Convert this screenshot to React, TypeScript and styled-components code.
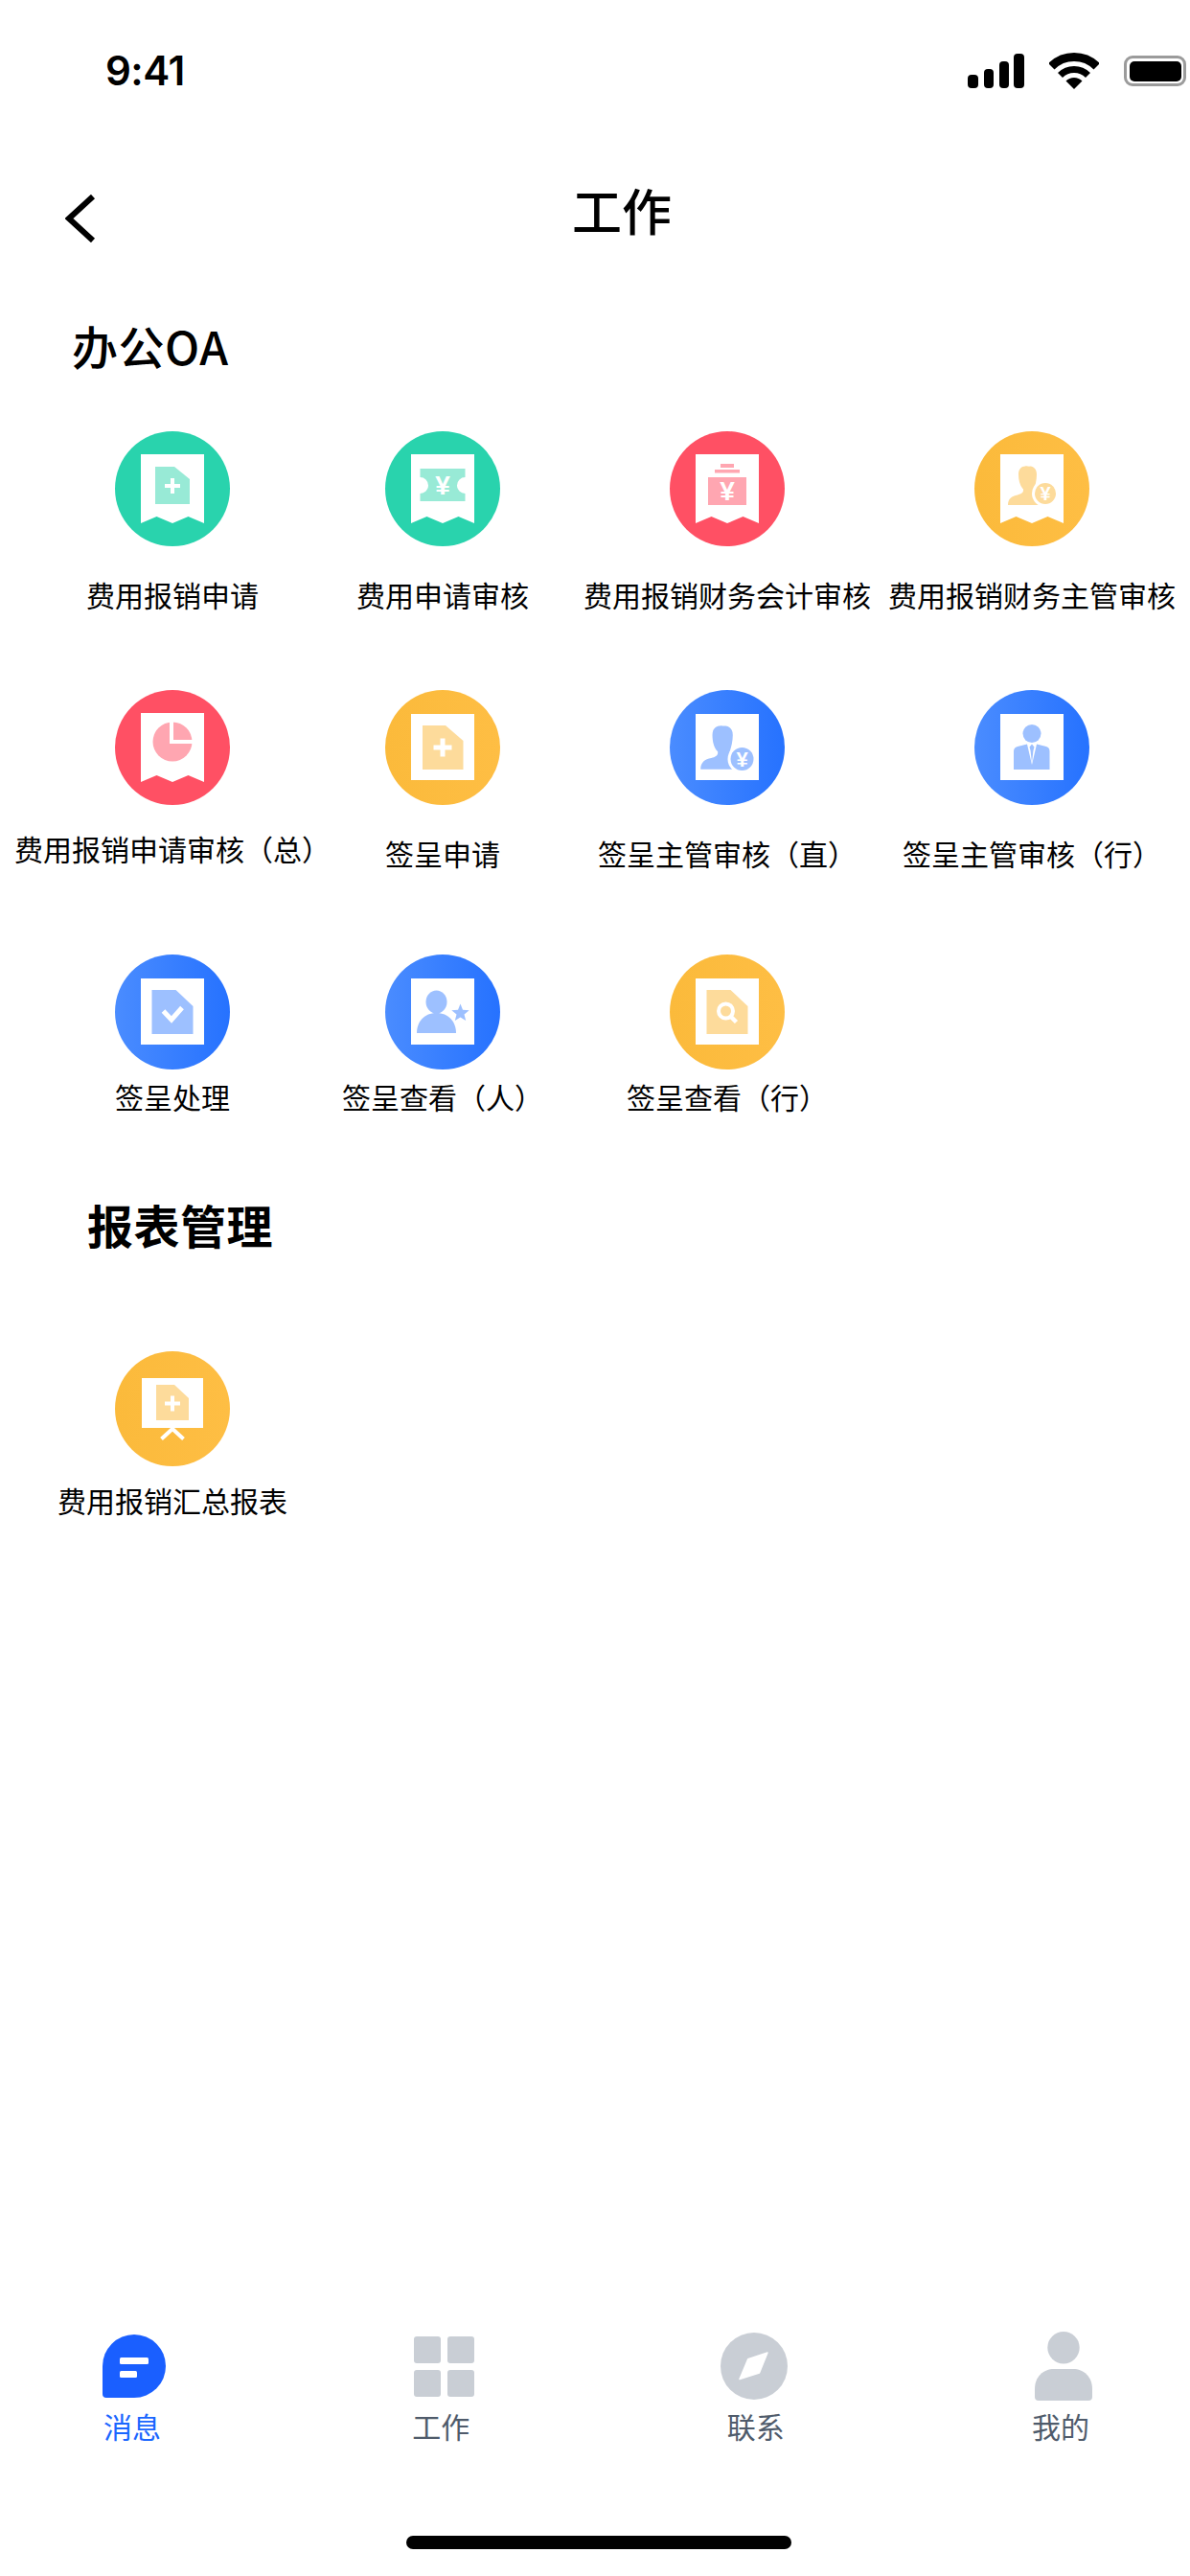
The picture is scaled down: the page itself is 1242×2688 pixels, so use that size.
import React from 'react';
import styled, { createGlobalStyle } from 'styled-components';

const GlobalStyle = createGlobalStyle`
  html, body {
    margin: 0;
    padding: 0;
    background: #fff;
  }
`;

type Tone = 'green' | 'red' | 'yellow' | 'blue';

const toneBackground: Record<Tone, string> = {
  green: '#29d3ad',
  red: '#ff5064',
  yellow: 'linear-gradient(90deg, #fbba3b 0%, #febe44 100%)',
  blue: 'linear-gradient(90deg, #4a8cff 0%, #2672ff 100%)',
};

const toneSoft: Record<Tone, string> = {
  green: '#98ead6',
  red: '#ffa6b1',
  yellow: '#fddb9b',
  blue: '#9dc0ff',
};

const Page = styled.div`
  width: 1242px;
  height: 2688px;
  display: flex;
  flex-direction: column;
  background: #fff;
  overflow: hidden;
  font-family: 'Noto Sans CJK SC', 'Noto Sans', sans-serif;
  color: #000;
`;

const StatusBar = styled.div`
  height: 148px;
  padding: 0 4px 0 110px;
  display: flex;
  align-items: center;
  justify-content: space-between;
  box-sizing: border-box;
`;

const StatusTime = styled.span`
  font-family: Inter, 'Liberation Sans', sans-serif;
  font-size: 42px;
  font-weight: 600;
  letter-spacing: -0.5px;
  margin-top: -2px;
`;

const StatusIcons = styled.div`
  display: flex;
  align-items: center;
`;

const Battery = styled.div`
  width: 65px;
  height: 32px;
  margin-left: 26px;
  padding: 2.5px;
  box-sizing: border-box;
  border: 3px solid #9b9b9b;
  border-radius: 9px;
  &::after {
    content: '';
    display: block;
    width: 100%;
    height: 100%;
    background: #000;
    border-radius: 5px;
  }
`;

const Header = styled.header`
  height: 160px;
  padding-left: 68px;
  display: flex;
  align-items: center;
  gap: 497px;
`;

const PageTitle = styled.h1`
  margin: -18px 0 0;
  font-size: 52px;
  line-height: 64px;
  font-weight: 500;
`;

const SectionTitle = styled.h2<{ $indent: number; $top: number; $weight: number }>`
  margin: ${(p) => p.$top}px 0 0 ${(p) => p.$indent}px;
  font-size: 48px;
  line-height: 60px;
  font-weight: ${(p) => p.$weight};
  letter-spacing: 0.5px;
`;

const TileRow = styled.div<{ $top: number }>`
  margin-top: ${(p) => p.$top}px;
  display: grid;
  grid-template-columns: 360px 204px 390px 246px;
`;

const Tile = styled.div`
  display: flex;
  flex-direction: column;
  align-items: center;
`;

const IconCircle = styled.div<{ $tone: Tone }>`
  width: 120px;
  height: 120px;
  border-radius: 50%;
  background: ${(p) => toneBackground[p.$tone]};
  svg {
    display: block;
  }
`;

const TileLabel = styled.span<{ $gap: number }>`
  margin-top: ${(p) => p.$gap}px;
  font-size: 30px;
  line-height: 40px;
  white-space: nowrap;
`;

const YenText = styled.text`
  font-family: 'Liberation Sans', sans-serif;
  font-weight: 700;
  fill: #fff;
  text-anchor: middle;
`;

const TabBar = styled.nav`
  margin-top: auto;
  padding: 0 92px 0 100px;
  display: flex;
  justify-content: space-between;
`;

const Tab = styled.div<{ $shift: number }>`
  width: 80px;
  display: flex;
  flex-direction: column;
  align-items: center;
  gap: 6px;
  span {
    position: relative;
    left: ${(p) => p.$shift}px;
  }
`;

const TabIconBox = styled.div`
  height: 72px;
  display: flex;
  align-items: center;
  justify-content: center;
`;

const TabLabel = styled.span<{ $active?: boolean }>`
  font-size: 30px;
  line-height: 40px;
  white-space: nowrap;
  color: ${(p) => (p.$active ? '#1a66ff' : '#4f5b6b')};
`;

const HomeBar = styled.div`
  width: 402px;
  height: 14px;
  margin: 95px 0 28px 424px;
  border-radius: 7px;
  background: #000;
`;

const Art: React.FC<{ children: React.ReactNode }> = ({ children }) => (
  <svg width="120" height="120" viewBox="0 0 120 120">
    {children}
  </svg>
);

const ReceiptSheet = () => <path d="M27 24H93V96L76.5 89L60 96L43.5 89L27 96Z" fill="#fff" />;
const PlainSheet = () => <rect x="27" y="25" width="66" height="69" fill="#fff" />;

const PlusMark: React.FC<{ cx: number; cy: number; size: number; bar: number }> = ({ cx, cy, size, bar }) => (
  <path
    d={`M${cx - size / 2} ${cy}H${cx + size / 2}M${cx} ${cy - size / 2}V${cy + size / 2}`}
    stroke="#fff"
    strokeWidth={bar}
  />
);

const BustShape: React.FC<{ fill: string }> = ({ fill }) => (
  <path
    d="M35 77C35 70.5 39 67.5 45 66.5C49 65.5 51.5 64 51 60.5C47.5 57 46 51 46 45C46 39.5 49 36.5 53 36.5C55 36 56.5 37 58.5 36.5C62 37 65 39.5 65 45C65 52 63 58 62 61C62 64 68 66 75 68V77Z"
    fill={fill}
  />
);

const icons: Record<string, (soft: string) => React.ReactNode> = {
  receiptAdd: (soft) => (
    <>
      <ReceiptSheet />
      <path d="M42 37H62L78 50V76H42Z" fill={soft} />
      <PlusMark cx={60} cy={57} size={16} bar={4} />
    </>
  ),
  receiptTicket: (soft) => (
    <>
      <ReceiptSheet />
      <path
        d="M36.5 39H83.5V48A8.5 8.5 0 0 0 83.5 65V73H36.5V65A8.5 8.5 0 0 0 36.5 48Z"
        fill={soft}
      />
      <YenText x="60" y="66" fontSize="28">¥</YenText>
    </>
  ),
  receiptBag: (soft) => (
    <>
      <ReceiptSheet />
      <rect x="53" y="34" width="14" height="4" fill={soft} />
      <rect x="47" y="40" width="26" height="3.5" fill={soft} />
      <rect x="40" y="48" width="40" height="29" fill={soft} />
      <YenText x="60" y="72" fontSize="28">¥</YenText>
    </>
  ),
  receiptManager: (soft) => (
    <>
      <ReceiptSheet />
      <BustShape fill={soft} />
      <circle cx="74" cy="65" r="14" fill="#fff" />
      <circle cx="74" cy="65" r="11" fill={soft} />
      <YenText x="74" y="72" fontSize="20">¥</YenText>
    </>
  ),
  receiptPie: (soft) => (
    <>
      <ReceiptSheet />
      <circle cx="60" cy="54" r="20.5" fill={soft} />
      <path d="M59 32V54H82" fill="none" stroke="#fff" strokeWidth="4" />
    </>
  ),
  docAdd: (soft) => (
    <>
      <PlainSheet />
      <path d="M39 37H63L81.5 53V83H39Z" fill={soft} />
      <PlusMark cx={60} cy={60} size={19} bar={5} />
    </>
  ),
  docManager: (soft) => (
    <>
      <PlainSheet />
      <g transform="translate(-7 -3.5) scale(1.12)">
        <BustShape fill={soft} />
      </g>
      <circle cx="75.5" cy="72" r="15" fill="#fff" />
      <circle cx="75.5" cy="72" r="12" fill={soft} />
      <YenText x="75.5" y="80" fontSize="22">¥</YenText>
    </>
  ),
  docSuit: (soft) => (
    <>
      <PlainSheet />
      <circle cx="60" cy="45.5" r="9.5" fill={soft} />
      <path d="M41 83V64Q41 60 45 59L55 56.5L60 78L65 56.5L75 59Q78.5 60 78.5 64V83Z" fill={soft} />
      <path d="M57.5 59.5L60 56.5L62.5 59.5L61.5 63L60 76L58.5 63Z" fill={soft} />
    </>
  ),
  docCheck: (soft) => (
    <>
      <PlainSheet />
      <path d="M38.5 37H63.5L81.5 54V83H38.5Z" fill={soft} />
      <path d="M50.5 59L59 68L70 55.5" fill="none" stroke="#fff" strokeWidth="5" />
    </>
  ),
  docStar: (soft) => (
    <>
      <PlainSheet />
      <ellipse cx="53.5" cy="49.5" rx="11" ry="12" fill={soft} />
      <path d="M33 82C33 70 41 61 53.5 61C66 61 74 70 74 82Z" fill={soft} />
      <path
        d="M78.5 51.5L81 57.8L87.7 58.2L82.5 62.5L84.2 69L78.5 65.4L72.8 69L74.5 62.5L69.3 58.2L76 57.8Z"
        fill={soft}
      />
    </>
  ),
  docSearch: (soft) => (
    <>
      <PlainSheet />
      <path d="M38.5 37H63.5L81.5 54V83H38.5Z" fill={soft} />
      <circle cx="58.5" cy="59" r="7.5" fill="none" stroke="#fff" strokeWidth="4" />
      <path d="M63.5 64.5L69.5 70.5" stroke="#fff" strokeWidth="4.5" />
    </>
  ),
  board: (soft) => (
    <>
      <rect x="28" y="28" width="64" height="52" fill="#fff" />
      <path d="M43 35H62L77 49V72H43Z" fill={soft} />
      <PlusMark cx={60} cy={54.5} size={16} bar={4} />
      <path d="M48.5 91.5L60 81L71.5 91.5" fill="none" stroke="#fff" strokeWidth="4" />
    </>
  ),
};

interface TileData {
  label: string;
  tone: Tone;
  icon: keyof typeof icons;
  gap?: number;
}

const rowOne: TileData[] = [
  { label: '费用报销申请', tone: 'green', icon: 'receiptAdd' },
  { label: '费用申请审核', tone: 'green', icon: 'receiptTicket' },
  { label: '费用报销财务会计审核', tone: 'red', icon: 'receiptBag' },
  { label: '费用报销财务主管审核', tone: 'yellow', icon: 'receiptManager' },
];

const rowTwo: TileData[] = [
  { label: '费用报销申请审核（总）', tone: 'red', icon: 'receiptPie', gap: 25 },
  { label: '签呈申请', tone: 'yellow', icon: 'docAdd' },
  { label: '签呈主管审核（直）', tone: 'blue', icon: 'docManager' },
  { label: '签呈主管审核（行）', tone: 'blue', icon: 'docSuit' },
];

const rowThree: TileData[] = [
  { label: '签呈处理', tone: 'blue', icon: 'docCheck' },
  { label: '签呈查看（人）', tone: 'blue', icon: 'docStar' },
  { label: '签呈查看（行）', tone: 'yellow', icon: 'docSearch' },
];

const rowFour: TileData[] = [{ label: '费用报销汇总报表', tone: 'yellow', icon: 'board' }];

const TileGrid: React.FC<{ items: TileData[]; top: number; gap: number }> = ({ items, top, gap }) => (
  <TileRow $top={top}>
    {items.map((item) => (
      <Tile key={item.label}>
        <IconCircle $tone={item.tone}>
          <Art>{icons[item.icon](toneSoft[item.tone])}</Art>
        </IconCircle>
        <TileLabel $gap={item.gap ?? gap}>{item.label}</TileLabel>
      </Tile>
    ))}
  </TileRow>
);

const tabGrey = '#c9ced5';

const App: React.FC = () => (
  <Page>
    <GlobalStyle />
    <StatusBar>
      <StatusTime>9:41</StatusTime>
      <StatusIcons>
        <svg width="60" height="36" viewBox="0 0 60 36">
          <rect x="0" y="22" width="11" height="14" rx="4" />
          <rect x="17" y="16" width="10" height="20" rx="4" />
          <rect x="33" y="8" width="10" height="28" rx="4" />
          <rect x="48" y="0" width="11" height="36" rx="4" />
        </svg>
        <svg width="52" height="38" viewBox="0 0 52 38" style={{ marginLeft: 25 }}>
          <clipPath id="wifi-wedge">
            <path d="M26 38L0 12V0H52V12Z" />
          </clipPath>
          <g clipPath="url(#wifi-wedge)" fill="none" stroke="#000">
            <circle cx="26" cy="38" r="33.5" strokeWidth="9" />
            <circle cx="26" cy="38" r="20.5" strokeWidth="7" />
            <circle cx="26" cy="38" r="6" strokeWidth="12" />
          </g>
        </svg>
        <Battery />
      </StatusIcons>
    </StatusBar>

    <Header>
      <svg width="32" height="50" viewBox="0 0 32 50">
        <path d="M29 2L4 25L29 48" fill="none" stroke="#000" strokeWidth="6" />
      </svg>
      <PageTitle>工作</PageTitle>
    </Header>

    <SectionTitle $indent={75} $top={22} $weight={500}>办公OA</SectionTitle>
    <TileGrid items={rowOne} top={60} gap={30} />
    <TileGrid items={rowTwo} top={80} gap={30} />
    <TileGrid items={rowThree} top={86} gap={8} />

    <SectionTitle $indent={91} $top={83} $weight={700}>报表管理</SectionTitle>
    <TileGrid items={rowFour} top={103} gap={15} />

    <TabBar>
      <Tab $shift={-2}>
        <TabIconBox>
          <svg width="66" height="66" viewBox="0 0 66 66">
            <path
              d="M33 0A33 33 0 0 1 33 66H4A4 4 0 0 1 0 62V33A33 33 0 0 1 33 0Z"
              fill="#1a5fff"
            />
            <rect x="18" y="24" width="30" height="7" rx="1.5" fill="#fff" />
            <rect x="18" y="38" width="18" height="7" rx="1.5" fill="#fff" />
          </svg>
        </TabIconBox>
        <TabLabel $active>消息</TabLabel>
      </Tab>
      <Tab $shift={-3}>
        <TabIconBox>
          <svg width="63" height="63" viewBox="0 0 63 63" fill={tabGrey}>
            <rect x="0" y="0" width="28" height="28" rx="3" />
            <rect x="35" y="0" width="28" height="28" rx="3" />
            <rect x="0" y="35" width="28" height="28" rx="3" />
            <rect x="35" y="35" width="28" height="28" rx="3" />
          </svg>
        </TabIconBox>
        <TabLabel>工作</TabLabel>
      </Tab>
      <Tab $shift={2}>
        <TabIconBox>
          <svg width="70" height="70" viewBox="0 0 70 70">
            <circle cx="35" cy="35" r="35" fill={tabGrey} />
            <path d="M49 21L40.5 42L20 48.5L28.7 27.7Z" fill="#fff" stroke="#fff" strokeWidth="1.5" strokeLinejoin="round" />
          </svg>
        </TabIconBox>
        <TabLabel>联系</TabLabel>
      </Tab>
      <Tab $shift={-3}>
        <TabIconBox>
          <svg width="60" height="72" viewBox="0 0 60 72" fill={tabGrey}>
            <circle cx="30" cy="16.7" r="16.7" />
            <path d="M0 68V60C0 47 9 39 20 39H40C51 39 60 47 60 60V68A4 4 0 0 1 56 72H4A4 4 0 0 1 0 68Z" />
          </svg>
        </TabIconBox>
        <TabLabel>我的</TabLabel>
      </Tab>
    </TabBar>
    <HomeBar />
  </Page>
);

export default App;
